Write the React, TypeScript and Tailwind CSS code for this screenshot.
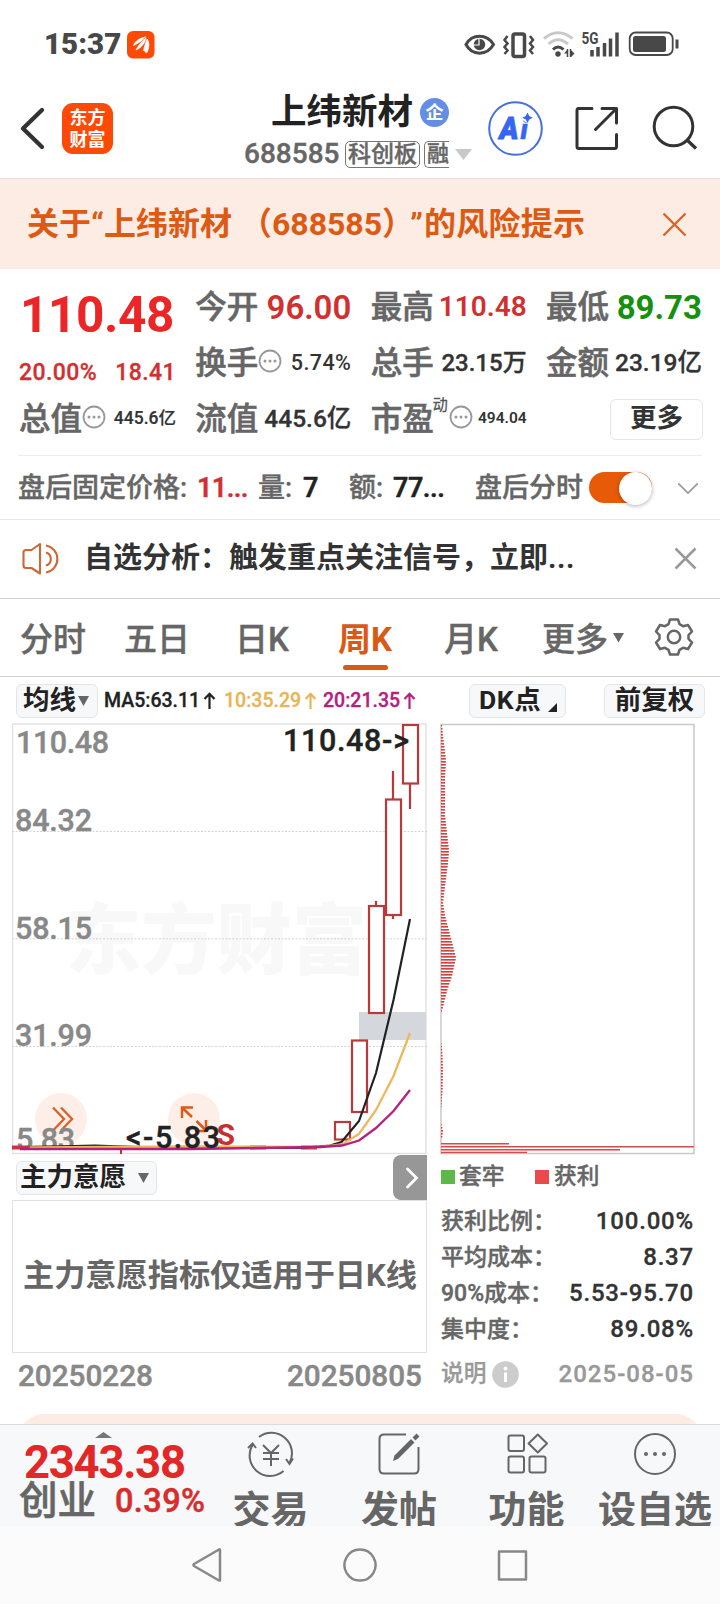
import React from "react";

const FONT = "font-[Roboto,'Noto_Sans_CJK_SC',sans-serif]";

function Divider({ className = "" }: { className?: string }) {
  return <div className={`h-px shrink-0 ${className}`} />;
}

function StatusBar() {
  return (
    <div className="flex h-[88px] items-center pt-[1px] pl-[44px] pr-[41px]">
      <span className="w-[83px] text-[29.5px] leading-none font-black text-[#484848]">15:37</span>
      <svg width="28" height="28" viewBox="0 0 28 28">
        <rect width="27.5" height="27.5" rx="6" fill="#ff4a05" />
        <path d="M6.500 14.500C8 10 13 7 18.500 6C15.500 8.500 14 11 6.500 14.500Z" fill="#fff" stroke="#fff" strokeWidth="0.800" />
        <path d="M9 19C11 15 15 10 19 6.800C18.500 11 14.500 17 9 19Z" fill="#fff" stroke="#fff" strokeWidth="0.800" />
        <path d="M16.500 19.500C17.500 15 18.800 11 20.300 8C22.500 12 22.500 17 19.500 22C18.500 20.500 17.500 19.800 16.500 19.500Z" fill="#fff" stroke="#fff" strokeWidth="0.800" />
      </svg>
      <svg className="ml-auto" width="216" height="30" viewBox="463 30 216 30">
        <path d="M466 44.500C472 33.500 487 33.500 493.500 44.500C487 56 472 56 466 44.500Z" fill="none" stroke="#484848" strokeWidth="3" />
        <circle cx="479.500" cy="44.500" r="5.700" fill="#484848" />
        <path d="M479 39v6h-5" fill="none" stroke="#fff" strokeWidth="1.200" />
        <rect x="513" y="34" width="11.500" height="22.500" rx="2" fill="none" stroke="#484848" strokeWidth="3.500" />
        <path d="M507.500 36l-3 4 3 3.500-3 3.500 3 3.500-3 3.500M530 36l3 4-3 3.500 3 3.500-3 3.500 3 3.500" fill="none" stroke="#484848" strokeWidth="2.500" />
        <path d="M544 38.500Q558 27 572.500 38.500" fill="none" stroke="#c9c9c9" strokeWidth="3" />
        <path d="M548.500 44Q558 35.500 568 44" fill="none" stroke="#c9c9c9" strokeWidth="3" />
        <path d="M553 49.500Q558 44.500 563.500 49.500" fill="none" stroke="#484848" strokeWidth="3" />
        <circle cx="558" cy="54" r="2.700" fill="#484848" />
        <path d="M567.500 49v8M570.500 49v8" stroke="#484848" strokeWidth="1.500" />
        <path d="M567.500 49.500l-3.500 4h3.500zM571 50l3.500 3.500-3.500 3.500z" fill="#484848" />
        <text x="581.500" y="43.500" textLength="17" lengthAdjust="spacingAndGlyphs" className="fill-[#484848] text-[16px] font-bold">5G</text>
        <path d="M592 50v6.500M598 47v9.500M604.500 43v13.500M610.500 38.500v18M617 32.500v24" stroke="#484848" strokeWidth="3.500" />
        <rect x="629.700" y="32.500" width="43" height="22.500" rx="6" fill="none" stroke="#484848" strokeWidth="1.800" />
        <rect x="633" y="36" width="33" height="16" rx="2.500" fill="#484848" />
        <path d="M677 39.500v9" stroke="#484848" strokeWidth="3" />
      </svg>
    </div>
  );
}

function Header() {
  return (
    <header className="flex h-[90px] items-start">
      <svg className="ml-[18px] mt-[18px]" width="28" height="46" viewBox="0 0 28 46">
        <path d="M24 4L5 22.500L24 41" fill="none" stroke="#333" strokeWidth="4.300" strokeLinecap="round" strokeLinejoin="round" />
      </svg>
      <div className="ml-[16px] mt-[15px] flex h-[51px] w-[51px] flex-col items-center justify-center rounded-[11px] bg-[#ff4a05] pb-[3px] font-['Noto_Sans_CJK_SC'] text-[18px] leading-[22px] font-bold text-white">
        <span>东方</span>
        <span>财富</span>
      </div>
      <div className="ml-[130px] w-[231px] shrink-0">
        <div className="flex h-[49px] items-center pl-[28px]">
          <span className="text-[35.500px] leading-none font-bold text-[#222]">上纬新材</span>
          <span className="ml-[7px] flex h-[29px] w-[29px] items-center justify-center rounded-full bg-[#648ee3] text-[18px] leading-none font-bold text-white">企</span>
        </div>
        <div className="mt-[3px] flex h-[28px] items-center pl-px text-[#666] [-webkit-text-stroke:0.4px]">
          <span className="w-[101px] text-[28px] leading-none font-medium">688585</span>
          <span className="flex h-[27px] w-[75px] items-center justify-center rounded-[5px] border border-[#777] text-[23px] leading-none font-medium">科创板</span>
          <span className="ml-[4px] flex h-[27px] w-[25px] items-center overflow-hidden rounded-l-[5px] border border-r-0 border-[#777] pl-[2px] text-[22px] leading-none font-medium">融</span>
          <svg className="ml-[6px]" width="17" height="11" viewBox="0 0 17 11"><path d="M0 0h17L8.500 11z" fill="#c8c8c8" /></svg>
        </div>
      </div>
      <svg className="ml-[13px] mt-[12px] shrink-0" width="56" height="56" viewBox="487 100 56 56">
        <circle cx="515.500" cy="128.500" r="26.300" fill="none" stroke="#456fe0" strokeWidth="2" />
        <text x="499.500" y="138.500" textLength="19" lengthAdjust="spacingAndGlyphs" className="fill-[#3465f3] stroke-[#3465f3] stroke-[1px] text-[31px] font-black italic">A</text>
        <text x="520.500" y="138.500" className="fill-[#3465f3] stroke-[#3465f3] stroke-[0.5px] text-[27px] font-black italic">i</text>
        <circle cx="527.500" cy="117" r="5.400" fill="#fff" />
        <path d="M527.500 112.500l1.700 3.500 3.500 1.700-3.500 1.700-1.700 3.500-1.700-3.500-3.500-1.700 3.500-1.700z" fill="#3465f3" />
      </svg>
      <svg className="ml-[31px] mt-[18px] shrink-0" width="46" height="46" viewBox="574 106 46 46" fill="none" stroke="#333" strokeWidth="3" strokeLinecap="round" strokeLinejoin="round">
        <path d="M592 108.500H578.500Q577 108.500 577 110.500V146.500Q577 148.500 579 148.500H614.500Q616.500 148.500 616.500 146.500V134.500M602 108.500H616.500V123M616 109L595.500 129.500" />
      </svg>
      <svg className="ml-[31px] mt-[16px] shrink-0" width="48" height="48" viewBox="651 104 48 48" fill="none" stroke="#333" strokeWidth="3">
        <circle cx="673.500" cy="126.500" r="19.300" />
        <path d="M686.500 139.500L696 148.500" strokeWidth="3.300" />
      </svg>
    </header>
  );
}

function RiskBanner() {
  return (
    <div className="flex h-[90px] items-center justify-between bg-[#fcece3] pr-[33px] pl-[27px]">
      <span className="w-[570px] text-[32px] leading-none font-bold whitespace-nowrap text-[#dc5a14] [text-spacing-trim:space-all]">
        关于“上纬新材<span className="ml-[8px]">（688585）</span><span className="-ml-[4px] mr-[1px]">”</span>
        <span className="tracking-[0.2px]">的风险提示</span>
      </span>
      <svg width="25" height="25" viewBox="0 0 25 25"><path d="M1.500 1.500l22 22M23.500 1.500l-22 22" stroke="#d8652c" strokeWidth="2.400" /></svg>
    </div>
  );
}

function Dots() {
  return (
    <svg width="24" height="24" viewBox="0 0 24 24" className="mt-[-5px] shrink-0">
      <circle cx="12" cy="12" r="10.500" fill="none" stroke="#999" strokeWidth="1.800" />
      <circle cx="7" cy="12" r="1.500" fill="#999" />
      <circle cx="12" cy="12" r="1.500" fill="#999" />
      <circle cx="17" cy="12" r="1.500" fill="#999" />
    </svg>
  );
}

function Cell({ label, value, valueClass, extra }: { label: string; value: string; valueClass: string; extra?: React.ReactNode }) {
  return (
    <div className="flex h-[56px] items-center whitespace-nowrap">
      <span className="pt-[1px] text-[31.5px] leading-none font-medium text-[#666] [-webkit-text-stroke:0.6px]">{label}</span>
      {extra}
      <span className={`ml-auto leading-none ${valueClass}`}>{value}</span>
    </div>
  );
}

function Quote() {
  return (
    <section className="flex h-[186px] justify-between pt-[10px] pr-[18px] pl-[19px]">
      <div className="w-[157px]">
        <div className="flex h-[71px] items-center pt-[2px] pl-[1px]">
          <span className="text-[49.5px] leading-none font-bold tracking-[-0.4px] text-[#ec2626]">110.48</span>
        </div>
        <div className="flex h-[41px] items-center justify-between pt-[4px] text-[23px] leading-none font-medium tracking-[0.4px] text-[#d23030] [-webkit-text-stroke:0.3px]">
          <span>20.00%</span>
          <span>18.41</span>
        </div>
        <Cell label="总值" value="445.6亿" valueClass="text-[17.5px] text-[#333] font-medium [-webkit-text-stroke:0.2px]" extra={<Dots />} />
      </div>
      <div className="w-[156px]">
        <Cell label="今开" value="96.00" valueClass="text-[33px] text-[#d23030] font-semibold" />
        <Cell label="换手" value="5.74%" valueClass="text-[21.5px] tracking-[0.4px] text-[#333] font-medium" extra={<Dots />} />
        <Cell label="流值" value="445.6亿" valueClass="text-[24.5px] text-[#333] font-medium [-webkit-text-stroke:0.3px]" />
      </div>
      <div className="w-[156px]">
        <Cell label="最高" value="110.48" valueClass="text-[28px] text-[#d23030] font-semibold" />
        <Cell label="总手" value="23.15万" valueClass="text-[24px] text-[#333] font-medium [-webkit-text-stroke:0.3px]" />
        <Cell
          label="市盈"
          value="494.04"
          valueClass="text-[15.5px] text-[#333] font-semibold"
          extra={
            <>
              <span className="mb-[28px] -ml-px w-[16px] text-[15px] leading-none text-[#555] [-webkit-text-stroke:0.3px]">动</span>
              <Dots />
            </>
          }
        />
      </div>
      <div className="w-[156px]">
        <Cell label="最低" value="89.73" valueClass="text-[33px] text-[#16900f] font-bold" />
        <Cell label="金额" value="23.19亿" valueClass="text-[24.5px] text-[#333] font-medium [-webkit-text-stroke:0.3px]" />
        <div className="flex h-[56px] items-center justify-end">
          <button className="mr-[-1px] flex h-[41px] w-[93px] items-center justify-center rounded-[6px] border-[1.500px] border-[#e6e6e6] pb-[2px] text-[26.5px] leading-none font-bold text-[#333]">更多</button>
        </div>
      </div>
    </section>
  );
}

function AfterHours() {
  return (
    <div className="flex h-[63px] items-center pl-[18px] text-[27px] leading-none font-medium whitespace-nowrap text-[#666] [-webkit-text-stroke:0.4px] *:pt-[1px]">
      <span className="w-[179px]">盘后固定价格:</span>
      <span className="w-[61px] font-semibold tracking-[-0.6px] text-[#d23030]">11...</span>
      <span className="w-[45px]">量:</span>
      <span className="w-[46px] font-semibold text-[#222]">7</span>
      <span className="w-[44px]">额:</span>
      <span className="w-[82px] font-semibold tracking-[-0.5px] text-[#222]">77...</span>
      <span className="w-[114px]">盘后分时</span>
      <div className="flex h-[31px] w-[63px] items-center justify-end rounded-full bg-[#e75a08]">
        <div className="h-[33px] w-[33px] rounded-full bg-white shadow-[0_1px_4px_rgba(0,0,0,0.300)]" />
      </div>
      <svg className="ml-[24px]" width="24" height="14" viewBox="0 0 24 14"><path d="M1.500 1.500L12 12L22.500 1.500" fill="none" stroke="#999" strokeWidth="1.800" /></svg>
    </div>
  );
}

function Notice() {
  return (
    <div className="flex h-[78px] items-center pr-[23px] pb-[1px] pl-[22px]">
      <svg width="40" height="34" viewBox="22 541 40 34" fill="none" stroke="#cb6836" strokeWidth="2.100" strokeLinejoin="round">
        <path d="M40 543L31.500 549H26Q23.500 549 23.500 551.500V564.500Q23.500 567 26 567H31.500L40 572.500ZM46 544.500A13.700 13.700 0 0 1 46 571.500M46 551.500A6.800 6.800 0 0 1 46 564.500" />
      </svg>
      <span className="ml-[22px] text-[29px] leading-none font-bold whitespace-nowrap text-[#333]">自选分析：触发重点关注信号，立即<span className="tracking-[0.6px]">...</span></span>
      <svg className="ml-auto" width="23" height="23" viewBox="0 0 23 23"><path d="M1.500 1.500l20 20M21.500 1.500l-20 20" stroke="#999" strokeWidth="2.500" /></svg>
    </div>
  );
}

function Tabs() {
  return (
    <nav className="flex h-[77px] items-center pt-[3px] pl-[20px] text-[33px] leading-none font-medium whitespace-nowrap text-[#666] [-webkit-text-stroke:0.4px]">
      <span className="w-[104px]">分时</span>
      <span className="w-[111px]">五日</span>
      <span className="w-[103px]">日K</span>
      <div className="flex h-full w-[106px] flex-col pt-[21px] text-[33px] font-bold text-[#d95a14] [-webkit-text-stroke:0px]">
        <span>周K</span>
        <span className="mt-[9px] ml-[5px] h-[5px] w-[45px] rounded-full bg-[#d95a14]" />
      </div>
      <span className="w-[98px]">月K</span>
      <span className="w-[71px]">更多</span>
      <svg className="mt-[-3px]" width="11" height="10" viewBox="0 0 11 10"><path d="M0 0h11L5.500 9.500z" fill="#666" /></svg>
      <svg className="mt-[-4px] ml-[30px]" width="40" height="40" viewBox="-20 -20 40 40" fill="none" stroke="#666" strokeWidth="2.500" strokeLinejoin="round">
        <path d="M-4 -17.500H4L5.500 -12.800L9 -10.800L14 -12L18 -5.500L14.500 -1.800V1.800L18 5.500L14 12L9 10.800L5.500 12.800L4 17.500H-4L-5.500 12.800L-9 10.800L-14 12L-18 5.500L-14.500 1.800V-1.800L-18 -5.500L-14 -12L-9 -10.800L-5.500 -12.800Z" />
        <circle r="6.200" />
      </svg>
    </nav>
  );
}

const CHIP = "flex h-[34px] items-center rounded-[6px] border border-[#e3e5e8] bg-[#f7f8fa] text-[26.5px] leading-none font-bold text-[#222]";

function Indicators() {
  return (
    <div className="flex h-[46px] items-center pt-[1px] pl-[16px] whitespace-nowrap">
      <div className={`${CHIP} w-[82px] pl-[6px]`}>
        均线
        <svg className="ml-[2px]" width="11" height="10" viewBox="0 0 11 10"><path d="M0 0h11L5.500 10z" fill="#666" /></svg>
      </div>
      <div className="flex w-[371px] pl-[6px] text-[19.5px] leading-none font-medium [-webkit-text-stroke:0.3px]">
        <span className="flex w-[120px] text-[#222]">MA5:63.11<Up /></span>
        <span className="flex w-[99px] text-[#e8b555]">10:35.29<Up /></span>
        <span className="flex w-[98px] text-[#b6207e]">20:21.35<Up /></span>
      </div>
      <div className={`${CHIP} w-[97px] pl-[9px]`}>
        <span className="tracking-[0.6px]">DK点</span>
        <svg className="mt-[14px] ml-[7px]" width="9" height="9" viewBox="0 0 9 9"><path d="M9 0v9H0z" fill="#222" /></svg>
      </div>
      <div className={`${CHIP} ml-[38px] w-[101px] justify-center`}>前复权</div>
    </div>
  );
}

function Up() {
  return (
    <svg className="mt-[1px] ml-[3px]" width="13" height="18" viewBox="0 0 13 18">
      <path d="M6.500 17V2M1.500 7L6.500 1.800L11.500 7" fill="none" stroke="currentColor" strokeWidth="2.200" />
    </svg>
  );
}

const CANDLES = [
  { x: 335.5, top: 1122, bottom: 1139.5, high: 1122, low: 1139.5 },
  { x: 352.5, top: 1040.5, bottom: 1112, high: 1040.5, low: 1112 },
  { x: 369.5, top: 906, bottom: 1013, high: 901, low: 1013 },
  { x: 386.5, top: 799.5, bottom: 915, high: 771, low: 919 },
  { x: 403.5, top: 725, bottom: 783.5, high: 725, low: 809 },
];

const AXIS = [
  { text: "110.48", x: 16, y: 753, w: 93 },
  { text: "84.32", x: 15, y: 831, w: 77 },
  { text: "58.15", x: 15, y: 939, w: 77 },
  { text: "31.99", x: 15, y: 1046, w: 77 },
];

const AXIS_TEXT = "fill-[#888] stroke-[#888] stroke-[0.4px] text-[30.5px] font-medium";
const MARK_TEXT = "fill-[#222] stroke-[#222] stroke-[0.4px] text-[30.5px] font-medium";

function CandleChart() {
  return (
    <svg width="415" height="432" viewBox="12 723 415 432" className="block">
      <text x="66" y="968" textLength="301" lengthAdjust="spacingAndGlyphs" className="fill-[#f8f8f8] font-['Noto_Sans_CJK_SC'] text-[77px] font-black">东方财富</text>
      <rect x="12.500" y="724" width="413.500" height="429.500" fill="none" stroke="#e2e2e2" strokeWidth="1.500" />
      <path d="M12 831.500H427M12 938.800H427M12 1046.500H427" stroke="#d4d4d4" strokeWidth="1" strokeDasharray="2 1.500" />
      <rect x="359" y="1012" width="67" height="28" fill="#d4d7dc" />
      <circle cx="61" cy="1119" r="26" fill="#fdefe8" />
      <circle cx="194" cy="1119" r="26" fill="#fdefe8" />
      <path d="M53 1107.500L64 1119L53 1130.500M61 1107.500L72 1119L61 1130.500" fill="none" stroke="#d9642b" strokeWidth="2.400" />
      {AXIS.map((a) => (
        <text key={a.text} x={a.x} y={a.y} textLength={a.w} className={AXIS_TEXT}>{a.text}</text>
      ))}
      <text x="16" y="1149.500" textLength="59" className={AXIS_TEXT}>5.83</text>
      {CANDLES.map((c) => (
        <g key={c.x} stroke="#b93a3a" strokeWidth="2.200" fill="#fff">
          <path d={`M${c.x + 6.5} ${c.high}V${c.low}`} />
          <rect x={c.x - 0.5} y={c.top} width="15" height={c.bottom - c.top} />
        </g>
      ))}
      <path d="M12 1147.500H29M250 1147.500H266M301 1147.500H317" stroke="#cf2f47" strokeWidth="4" />
      <path d="M121 1147V1154" stroke="#c83030" strokeWidth="2" />
      <path d="M29 1146.500H110" stroke="#1e8a2c" strokeWidth="1.500" />
      <path d="M30 1147L95 1145.500L140 1147L300 1148L330 1145.500L341.500 1142L359 1121L376 1073L393.500 1000L410 919" fill="none" stroke="#222" strokeWidth="2.200" />
      <path d="M30 1147.500L190 1146.500L320 1147L342 1144.500L359 1134L376 1110L393.500 1076L410 1033" fill="none" stroke="#ebb85c" strokeWidth="2.300" />
      <path d="M20 1149L190 1149L320 1147L342 1145.500L359 1140.500L376 1128L393.500 1111L410 1090" fill="none" stroke="#b6207e" strokeWidth="2.300" />
      <path d="M182 1118V1107.500H193M182.500 1108L192 1117M206 1120V1131H195M205.500 1130L196.500 1121" fill="none" stroke="#e05a14" strokeWidth="2.500" />
      <text x="283" y="751" textLength="126" className={MARK_TEXT}>110.48-&gt;</text>
      <text x="126" y="1147.500" textLength="94" className={MARK_TEXT}>&lt;-5.83</text>
      <text x="216.500" y="1144.500" className="fill-[#c83030] text-[30px] font-bold">S</text>
    </svg>
  );
}

const PROFILE: [number, number][] = [
  [724, 1], [735, 2], [760, 5], [775, 4], [815, 4], [850, 8], [862, 7], [885, 4], [902, 2], [915, 4], [930, 8], [957, 15], [975, 11], [990, 6], [1010, 1],
  [1012, 0], [1040, 0], [1050, 1.2], [1070, 2], [1090, 1.5], [1110, 0], [1122, 0], [1130, 2], [1138, 1], [1140, 0],
];

function profileWidth(y: number) {
  for (let i = 1; i < PROFILE.length; i++) {
    const [y0, w0] = PROFILE[i - 1];
    const [y1, w1] = PROFILE[i];
    if (y <= y1) return w0 + ((w1 - w0) * (y - y0)) / (y1 - y0);
  }
  return 0;
}

function CostChart() {
  const rows = Array.from({ length: 138 }, (_, i) => 725 + i * 3);
  return (
    <svg width="255" height="432" viewBox="440 723 255 432" className="block">
      <path d="M441 1153.500V724.500H694V1153.500Z" fill="none" stroke="#c9c9c9" strokeWidth="1.500" />
      {rows.map((y) => {
        const w = profileWidth(y);
        return w > 0 ? (
          <g key={y}>
            <rect x="441" y={y} width={w} height="2" fill="#f47c7c" />
            <rect x="441" y={y} width={w} height="1" fill="#bf4a4a" />
          </g>
        ) : null;
      })}
      <path d="M441 1144H509M441 1147H694M441 1150H620M441 1152.500H527" stroke="#f99" strokeWidth="2" />
      <path d="M441 1143.500H509M441 1146.500H694M441 1149.500H620M441 1152.500H527" stroke="#c95050" strokeWidth="1.200" />
    </svg>
  );
}

function Stat({ label, value }: { label: string; value: string }) {
  return (
    <div className="flex h-[36px] items-center justify-between whitespace-nowrap">
      <span className="text-[23px] text-[#666] [-webkit-text-stroke:0.4px]">{label}</span>
      <span className="text-[24px] tracking-[0.8px] text-[#333] [-webkit-text-stroke:0.3px]">{value}</span>
    </div>
  );
}

function Charts() {
  return (
    <section className="flex h-[691px] pl-[12px]">
      <div className="w-[415px]">
        <CandleChart />
        <div className="flex h-[45px] items-center justify-between pl-[4px]">
          <div className={`${CHIP} w-[141px] pl-[3px]`}>
            主力意愿
            <svg className="ml-[12px]" width="11" height="10" viewBox="0 0 11 10"><path d="M0 0h11L5.500 10z" fill="#666" /></svg>
          </div>
          <div className="flex h-[45px] w-[34px] items-center justify-center rounded-l-[8px] bg-[#979797]">
            <svg width="14" height="22" viewBox="0 0 14 22" className="ml-[3px]"><path d="M2.500 2L11.500 11L2.500 20" fill="none" stroke="#fff" strokeWidth="2.800" strokeLinecap="round" /></svg>
          </div>
        </div>
        <div className="flex h-[153px] items-center justify-center border-[1.500px] border-[#e2e2e2] pb-[2px] pl-[1px]">
          <span className="text-[31.2px] leading-none font-bold whitespace-nowrap text-[#666]">主力意愿指标仅适用于日K线</span>
        </div>
        <div className="flex h-[46px] items-center justify-between pr-[5px] pl-[6px] text-[29.7px] leading-none font-medium text-[#888] [-webkit-text-stroke:0.5px]">
          <span>20250228</span>
          <span>20250805</span>
        </div>
      </div>
      <div className="ml-[13px] w-[254px] leading-none font-medium">
        <CostChart />
        <div className="flex h-[47px] items-center pb-[3px] pl-[1px] text-[22.7px] text-[#666] [-webkit-text-stroke:0.4px]">
          <i className="mr-[4px] h-[14px] w-[14px] bg-[#5cb947]" />
          <span className="w-[76px]">套牢</span>
          <i className="mr-[5px] h-[14px] w-[14px] bg-[#e94b4b]" />
          <span>获利</span>
        </div>
        <div className="pt-px pl-[1px]">
          <Stat label="获利比例：" value="100.00%" />
          <Stat label="平均成本：" value="8.37" />
          <Stat label="90%成本：" value="5.53-95.70" />
          <Stat label="集中度：" value="89.08%" />
        </div>
        <div className="flex h-[54px] items-center pl-[1px] text-[22.7px] text-[#999] [-webkit-text-stroke:0.3px]">
          <span>说明</span>
          <svg className="ml-[6px]" width="27" height="27" viewBox="0 0 27 27">
            <circle cx="13.500" cy="13.500" r="13.300" fill="#ccc" />
            <path d="M13.500 11.500V21" stroke="#fff" strokeWidth="3" />
            <circle cx="13.500" cy="7.500" r="1.900" fill="#fff" />
          </svg>
          <span className="ml-auto text-[24px] tracking-[1px]">2025-08-05</span>
        </div>
      </div>
    </section>
  );
}

function Action({ label, width, children }: { label: string; width: string; children: React.ReactNode }) {
  return (
    <div className={`flex shrink-0 flex-col items-center ${width}`}>
      <svg className="mt-[5px] shrink-0" width="50" height="48" viewBox="-25 -24 50 48" fill="none" stroke="#666" strokeWidth="2">{children}</svg>
      <span className="mt-[13px] text-[38px] leading-none font-bold whitespace-nowrap text-[#666]">{label}</span>
    </div>
  );
}

function BottomBar() {
  return (
    <div className="flex h-[102px] shrink-0 overflow-hidden border-t border-[#d9dbde] bg-[#f7f8fa]">
      <div className="w-[206px] shrink-0 pl-[19px]">
        <svg className="mt-[7px] ml-[76px]" width="17" height="6" viewBox="0 0 17 6"><path d="M0 6L8.500 0L17 6z" fill="#777" /></svg>
        <div className="mt-[2px] flex h-[46px] items-center pl-[5px] text-[45.5px] leading-none font-bold tracking-[-1.3px] text-[#e32626]">2343.38</div>
        <div className="mt-[-4px] flex items-center whitespace-nowrap">
          <span className="w-[96px] text-[38.5px] leading-none font-medium text-[#666] [-webkit-text-stroke:0.6px]">创业</span>
          <span className="text-[32.5px] leading-none font-medium tracking-[0.4px] text-[#d92c2c] [-webkit-text-stroke:0.5px]">0.39%</span>
        </div>
      </div>
      <Action label="交易" width="w-[129px]">
        <path d="M-12 -17A20.500 20.500 0 0 1 18.500 9M22 4.500L18.500 10L15 5M12.500 17A20.500 20.500 0 0 1 -18.500 -9M-23 -6L-18.500 -10.500L-15 -6" />
        <path d="M-8 -9L0 -1L8 -9M0 -1V12M-8 -1H8M-8 5H8" />
      </Action>
      <Action label="发帖" width="w-[128px]">
        <path d="M7 -19.500H-15Q-19.500 -19.500 -19.500 -15V15Q-19.500 19.500 -15 19.500H15Q19.500 19.500 19.500 15V-7" />
        <path d="M-6 7L-4.500 1.500L12 -15L15.500 -11.500L-1 5Z" fill="#666" stroke="none" />
        <path d="M15 -15L19 -19" strokeWidth="4" />
      </Action>
      <Action label="功能" width="w-[127px]">
        <rect x="-18.500" y="-18.500" width="15.500" height="15.500" rx="2" />
        <rect x="-18.500" y="2.500" width="15.500" height="16" rx="2" />
        <rect x="2.500" y="2.500" width="16" height="16" rx="2" />
        <path d="M10.800 -19.500L20 -10.500L10.800 -1.500L1.600 -10.500Z" strokeLinejoin="round" />
      </Action>
      <Action label="设自选" width="w-[130px]">
        <circle r="20" />
        <g fill="#666" stroke="none"><circle cx="-9" r="2" /><circle r="2" /><circle cx="9" r="2" /></g>
      </Action>
    </div>
  );
}

function SystemNav() {
  return (
    <div className="flex h-[78px] shrink-0 items-center justify-center gap-x-[118.500px] bg-[#fbfbfb]">
      {["M29 3V33Q29 34 28 33.500L3 19Q2 18 3 17L28 2.500Q29 2 29 3Z", "M17 2.500A15.500 15.500 0 1 1 16.990 2.500Z", "M3 4.500H30V32.500H3Z"].map((d) => (
        <svg key={d} width="34" height="37" viewBox="0 0 34 37"><path d={d} fill="none" stroke="#888" strokeWidth="2.500" strokeLinejoin="round" /></svg>
      ))}
    </div>
  );
}

export default function App() {
  return (
    <main className={`flex h-[1604px] w-[720px] flex-col overflow-hidden bg-white ${FONT}`}>
      <StatusBar />
      <Header />
      <Divider className="bg-[#e8dddb]" />
      <RiskBanner />
      <Quote />
      <Divider className="mx-[18px] bg-[#ececec]" />
      <AfterHours />
      <Divider className="bg-[#e8e8e8]" />
      <Notice />
      <Divider className="bg-[#d2d2d2]" />
      <Tabs />
      <Divider className="bg-[#d2d2d2]" />
      <Indicators />
      <Charts />
      <div className="h-[10px] shrink-0 overflow-hidden px-[18px]">
        <div className="h-[60px] rounded-t-[26px] bg-[#fcece3]" />
      </div>
      <BottomBar />
      <SystemNav />
    </main>
  );
}
